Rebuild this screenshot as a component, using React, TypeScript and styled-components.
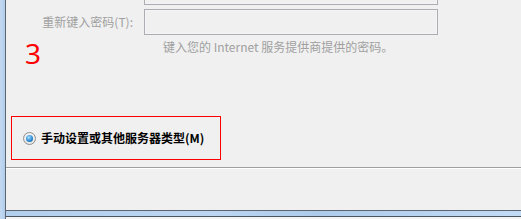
import React from "react";
import styled, { createGlobalStyle } from "styled-components";

const GlobalStyle = createGlobalStyle`
  html, body {
    margin: 0;
    padding: 0;
    background: #f0f0f0;
    overflow: hidden;
  }
  body {
    font-family: "Noto Sans CJK SC", "Noto Sans", sans-serif;
    font-size: 12px;
  }
`;

const Window = styled.div`
  display: flex;
  width: 521px;
  height: 219px;
  background: #f0f0f0;
`;

const LeftFrame = styled.div`
  width: 5px;
  flex: none;
  background: linear-gradient(90deg, #c4daf1 0%, #b0cdec 100%);
  border-right: 1px solid #5d6670;
`;

const Main = styled.div`
  flex: 1;
  display: flex;
  flex-direction: column;
  min-width: 0;
`;

const Panel = styled.div`
  position: relative;
  height: 167px;
  flex: none;
  overflow: hidden;
  display: flex;
  flex-direction: column;
`;

const Form = styled.div`
  display: grid;
  grid-template-columns: 138px 294px;
  row-gap: 4px;
  margin-top: -21px;
`;

const Label = styled.div`
  display: flex;
  align-items: center;
  justify-content: flex-end;
  padding-right: 11px;
  color: #a0a0a0;
  line-height: 16px;
  white-space: nowrap;
`;

const TextBox = styled.div`
  height: 26px;
  box-sizing: border-box;
  border: 1px solid #abadb3;
  box-shadow: inset 0 0 0 1px #f4f4f4;
  background: #f0f0f0;
`;

const Hint = styled.div`
  margin: 4px 0 0 157px;
  color: #a0a0a0;
  line-height: 16px;
  white-space: nowrap;
`;

const StepMark = styled.div`
  position: absolute;
  left: 19px;
  top: 34px;
  color: #ff0000;
  font-family: "Noto Sans", sans-serif;
  font-size: 28px;
  line-height: 38px;
`;

const Highlight = styled.div`
  margin: 61px 0 0 5px;
  width: 210px;
  height: 44px;
  box-sizing: border-box;
  border: 1px solid #ff0000;
  display: flex;
  align-items: center;
  padding-left: 11px;
  gap: 5px;
`;

const Radio = styled.span`
  width: 13px;
  height: 13px;
  flex: none;
  box-sizing: border-box;
  border-radius: 50%;
  border: 1px solid #8e8f8f;
  background: radial-gradient(circle at 50% 40%, #ffffff 0%, #e6e6e6 70%, #d4d4d4 100%);
  display: flex;
  align-items: center;
  justify-content: center;
`;

const RadioDot = styled.span`
  width: 7px;
  height: 7px;
  border-radius: 50%;
  background: radial-gradient(circle at 40% 35%, #a8e1ff 0%, #2f8bd4 55%, #0b4f8c 100%);
`;

const OptionText = styled.span`
  font-weight: bold;
  color: #000;
  line-height: 16px;
  white-space: nowrap;
`;

const Separator = styled.div`
  height: 1px;
  background: #a0a0a0;
  border-bottom: 1px solid #ffffff;
  flex: none;
`;

const Footer = styled.div`
  height: 41px;
  flex: none;
`;

const BottomFrame = styled.div`
  height: 5px;
  flex: none;
  border-top: 1px solid #5d6670;
  background: linear-gradient(90deg, #b3cfee 0%, #bcd6f2 40%, #aecbeb 60%, #c2dbf5 100%);
  border-bottom: 1px solid #4b5560;
`;

const Desktop = styled.div`
  flex: 1;
  background: #f4f4f4;
`;

export default function App() {
  return (
    <>
      <GlobalStyle />
      <Window>
        <LeftFrame />
        <Main>
          <Panel>
            <Form>
              <div />
              <TextBox />
              <Label>重新键入密码(T):</Label>
              <TextBox />
            </Form>
            <Hint>键入您的 Internet 服务提供商提供的密码。</Hint>
            <StepMark>3</StepMark>
            <Highlight>
              <Radio>
                <RadioDot />
              </Radio>
              <OptionText>手动设置或其他服务器类型(M)</OptionText>
            </Highlight>
          </Panel>
          <Separator />
          <Footer />
          <BottomFrame />
          <Desktop />
        </Main>
      </Window>
    </>
  );
}
